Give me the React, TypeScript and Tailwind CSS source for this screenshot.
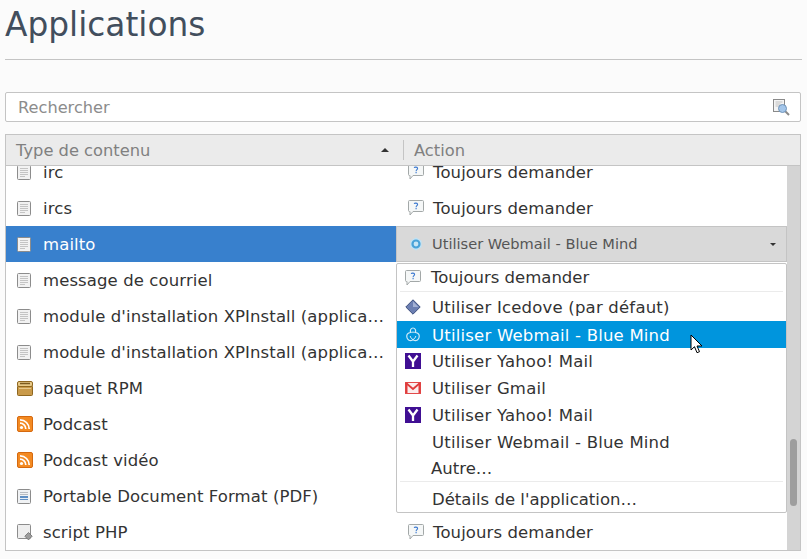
const FileIcon = () => (
  <svg width="14" height="15" viewBox="0 0 14 15" className="shrink-0">
    <rect x="0.500" y="0.500" width="13" height="14" rx="1" fill="#f2f2f2" stroke="#8c8c8c" />
    <path d="M3 3.500h8M3 5.500h8M3 7.500h8M3 9.500h8M3 11.500h5" stroke="#c4c4c4" />
  </svg>
);

const AskIcon = () => (
  <svg width="16" height="16" viewBox="0 0 16 16" className="shrink-0">
    <path d="M1.500 0.500h13a1 1 0 0 1 1 1v9a1 1 0 0 1-1 1H5l-3 3.500v-3.500h-.5a1 1 0 0 1-1-1v-9a1 1 0 0 1 1-1z" fill="#f5f7f7" stroke="#a3a8a8" />
    <path d="M6.200 3.900c.3-1 3.400-1.200 3.400.6 0 1.200-1.500 1.200-1.500 2.700M8.100 8v1.300" fill="none" stroke="#3b78d0" strokeWidth="1.100" />
  </svg>
);

const BoxIcon = () => (
  <svg width="16" height="15" viewBox="0 0 16 15" className="shrink-0">
    <rect x="0.500" y="5" width="15" height="9.500" rx="1" fill="#c99a4a" stroke="#8f6720" />
    <rect x="0.500" y="0.500" width="15" height="5" rx="1.500" fill="#e8c987" stroke="#8f6720" />
    <path d="M3 2.500h10" stroke="#7b5a20" strokeWidth="1.500" />
    <path d="M2 7.500h12" stroke="#e6c88c" />
  </svg>
);

const RssIcon = () => (
  <svg width="16" height="16" viewBox="0 0 16 16" className="shrink-0">
    <rect x="0.500" y="0.500" width="15" height="15" rx="1.500" fill="#f38a22" stroke="#d5690f" />
    <circle cx="4.500" cy="11.500" r="1.600" fill="#fff" />
    <path d="M3 7.200a5.800 5.800 0 0 1 5.800 5.800M3 3.800a9.200 9.200 0 0 1 9.200 9.200" fill="none" stroke="#fff" strokeWidth="1.700" />
  </svg>
);

const PdfIcon = () => (
  <svg width="14" height="15" viewBox="0 0 14 15" className="shrink-0">
    <rect x="0.500" y="0.500" width="13" height="14" rx="1" fill="#f0f2f4" stroke="#8c8c8c" />
    <path d="M3 3.500h8M3 5.500h8" stroke="#b8bcc2" />
    <rect x="3" y="7" width="8" height="4" fill="#5f8fc4" />
    <path d="M3 9.500h8" stroke="#e6eef6" />
  </svg>
);

const ScriptIcon = () => (
  <svg width="16" height="16" viewBox="0 0 16 16" className="shrink-0">
    <rect x="0.500" y="0.500" width="13" height="14" rx="1" fill="#eeeeee" stroke="#8c8c8c" />
    <path d="M11.500 8.500l3.700 3.700-3.700 3.700-3.700-3.700z" fill="#9c9c9c" stroke="#6e6e6e" strokeWidth="0.800" />
  </svg>
);

const DiamondIcon = () => (
  <svg width="16" height="16" viewBox="0 0 16 16" className="shrink-0">
    <path d="M8 0.800L15.200 8 8 15.200 0.800 8z" fill="#6c7fb2" stroke="#3e4f7e" />
    <path d="M8 2.500L13.500 8H8z" fill="#a3b1d4" />
  </svg>
);

const MindIcon = ({ stroke }: { stroke: string }) => (
  <svg width="16" height="16" viewBox="0 0 16 16" className="shrink-0">
    <path
      d="M5.500 5.500C4.800 2.800 6.200 1 8 1s3.200 1.800 2.500 4.500c2.600.4 4.100 2 3.700 4.500-.5 2.600-2.700 4-4.700 3.500-.5-.1-1-.4-1.500-.8-.5.4-1 .7-1.500.8-2 .5-4.200-.9-4.700-3.500-.4-2.500 1.100-4.100 3.700-4.500z"
      fill="none"
      stroke={stroke}
      strokeWidth="1.200"
    />
    <path d="M5.500 5.500c1.500-.5 3.500-.5 5 0M8 12.700c-1.500-1-2.500-2.200-2.800-3.700M8 12.700c1.500-1 2.500-2.200 2.800-3.700" fill="none" stroke={stroke} strokeWidth="1" />
  </svg>
);

const RingIcon = () => (
  <svg width="16" height="16" viewBox="0 0 16 16" className="shrink-0">
    <path d="M8 1.500l5.500 3.200v6.600L8 14.500l-5.500-3.200V4.700z" fill="#bfe3f6" />
    <circle cx="8" cy="8" r="3.500" fill="#c8e6f5" stroke="#4aa3d8" strokeWidth="2.200" />
  </svg>
);

const YahooIcon = () => (
  <svg width="16" height="16" viewBox="0 0 16 16" className="shrink-0">
    <rect width="16" height="16" fill="#400f93" />
    <path d="M3.500 2.500L8 8.500l4.500-6M8 8.500V14" fill="none" stroke="#fff" strokeWidth="2.300" />
  </svg>
);

const GmailIcon = () => (
  <svg width="16" height="16" viewBox="0 0 16 16" className="shrink-0">
    <rect x="0.500" y="2.500" width="15" height="11" fill="#fbeeee" stroke="#e24a4a" />
    <path d="M1 3l7 6 7-6" fill="none" stroke="#e03c3c" strokeWidth="1.800" />
    <path d="M1.500 3v10M14.500 3v10" stroke="#e03c3c" strokeWidth="2" />
  </svg>
);

const SearchIcon = () => (
  <svg width="17" height="17" viewBox="0 0 17 17" className="shrink-0">
    <rect x="0.500" y="0.500" width="11" height="12" fill="#f4f4f4" stroke="#8a8a8a" />
    <path d="M2.500 3h7M2.500 5h5M2.500 7h4" stroke="#c0c0c0" />
    <path d="M12 12l4 4" stroke="#8a8a8a" strokeWidth="2" />
    <circle cx="9.500" cy="9.500" r="4" fill="#a4c6ea" stroke="#6f93b8" />
  </svg>
);

const rows: { label: string; icon: React.ReactNode; selected?: boolean; hidden?: boolean }[] = [
  { label: "irc", icon: <FileIcon /> },
  { label: "ircs", icon: <FileIcon /> },
  { label: "mailto", icon: <FileIcon />, selected: true },
  { label: "message de courriel", icon: <FileIcon />, hidden: true },
  { label: "module d'installation XPInstall (applica…", icon: <FileIcon />, hidden: true },
  { label: "module d'installation XPInstall (applica…", icon: <FileIcon />, hidden: true },
  { label: "paquet RPM", icon: <BoxIcon />, hidden: true },
  { label: "Podcast", icon: <RssIcon />, hidden: true },
  { label: "Podcast vidéo", icon: <RssIcon />, hidden: true },
  { label: "Portable Document Format (PDF)", icon: <PdfIcon />, hidden: true },
  { label: "script PHP", icon: <ScriptIcon /> },
];

const menuItems = [
  { label: "Utiliser Yahoo! Mail", icon: <YahooIcon /> },
  { label: "Utiliser Gmail", icon: <GmailIcon /> },
  { label: "Utiliser Yahoo! Mail", icon: <YahooIcon /> },
  { label: "Utiliser Webmail - Blue Mind", icon: <span className="w-4" /> },
];

export default function App() {
  return (
    <div className="w-[807px] h-[559px] overflow-hidden bg-[#fbfbfb] px-[5px] font-['DejaVu_Sans',sans-serif] text-[#333333]">
      <h1 className="h-[60px] pt-[4px] border-b border-[#c4c4c4] text-[32.800px] leading-[42px] text-[#424e5d] font-normal">
        Applications
      </h1>

      <div className="mt-[32px] h-[30px] w-[796px] flex items-center justify-between pl-[12px] pr-[10px] bg-white border border-[#c4c4c4] rounded-[2px] text-[16.200px] text-[#8c8c8c]">
        <span className="pt-[2px]">Rechercher</span>
        <SearchIcon />
      </div>

      <div className="relative mt-[12px] w-[796px] h-[417px] border border-[#c4c4c4] bg-white">
        <div className="flex items-center h-[31px] bg-[#ebebeb] border-b border-[#c4c4c4] text-[16.300px] text-[#808080]">
          <div className="w-[397px] flex items-center justify-between pl-[10px] pr-[14px]">
            <span className="pt-[2px]">Type de contenu</span>
            <span className="w-0 h-0 border-x-[4px] border-x-transparent border-b-[4px] border-b-[#333333]" />
          </div>
          <div className="h-[20px] border-l border-[#c4c4c4] pl-[10px] leading-[22px]">Action</div>
        </div>

        <div className="flex h-[384px] overflow-hidden">
          <div className="flex-1 -mt-[12px]">
            {rows.map((row, i) => (
              <div key={i} className="flex h-[36px] items-center text-[16.500px] tracking-[0.100px]">
                <div
                  className={`w-[390px] h-full shrink-0 flex items-center pl-[11px] ${row.selected ? "bg-[#3880cd] text-white" : ""}`}
                >
                  <span className="w-[26px] shrink-0 flex">{row.icon}</span>
                  <span className="whitespace-nowrap pt-[2px]">{row.label}</span>
                </div>
                {!row.selected && !row.hidden && (
                  <div className="flex items-center pl-[12px] gap-[9px]">
                    <AskIcon />
                    <span className="pt-[2px]">Toujours demander</span>
                  </div>
                )}
                {row.selected && (
                  <div className="flex-1 h-full flex items-center justify-between pl-[11px] pr-[10px] bg-[#d9d9d9] border border-[#c4c4c4] text-[14.600px] tracking-normal text-[#555555]">
                    <span className="flex items-center gap-[8px]">
                      <RingIcon />
                      Utiliser Webmail - Blue Mind
                    </span>
                    <span className="w-0 h-0 border-x-[3px] border-x-transparent border-t-[3px] border-t-[#333333]" />
                  </div>
                )}
              </div>
            ))}
          </div>
          <div className="w-[13px] shrink-0 bg-[#d4d4d4] pt-[273px] pl-[3px]">
            <div className="w-[7px] h-[67px] rounded-full bg-[#9e9e9e]" />
          </div>
        </div>

        {/* popup du menu */}
        <div className="absolute left-[390px] top-[128px] w-[391px] h-[250px] bg-white border border-[#c4c4c4] rounded-[2px] text-[16.500px]">
          <div className="h-[27px] flex items-center pl-[8px] gap-[10px]">
            <AskIcon />
            <span className="pt-[2px]">Toujours demander</span>
          </div>
          <div className="mx-[3px] border-t border-[#ebebeb]" />
          <div className="h-[29px] flex items-center pl-[8px] gap-[11px] tracking-[0.200px]">
            <DiamondIcon />
            <span className="pt-[3px]">Utiliser Icedove (par défaut)</span>
          </div>
          <div className="h-[27px] flex items-center pl-[8px] gap-[11px] bg-[#0095dd] text-white tracking-[0.200px]">
            <MindIcon stroke="#cfeaf8" />
            <span className="pt-[4px]">Utiliser Webmail - Blue Mind</span>
          </div>
          {menuItems.map((item, i) => (
            <div key={i} className="h-[26.700px] flex items-center pl-[8px] gap-[11px] tracking-[0.200px]">
              {item.icon}
              <span className="pt-[3px]">{item.label}</span>
            </div>
          ))}
          <div className="h-[26px] flex items-center pl-[34px]">
            <span className="pt-[3px]">Autre…</span>
          </div>
          <div className="mx-[3px] border-t border-[#ebebeb]" />
          <div className="h-[30px] flex items-center pl-[35px]">
            <span className="pt-[7px]">Détails de l'application…</span>
          </div>
        </div>

        {/* curseur */}
        <svg width="14" height="20" viewBox="0 0 14 20" className="absolute left-[684px] top-[199px]">
          <path d="M1 1v15l3.500-3.300 2.500 6 2.500-1-2.500-5.700h5z" fill="#ffffff" stroke="#000000" strokeWidth="1" />
        </svg>
      </div>
    </div>
  );
}
